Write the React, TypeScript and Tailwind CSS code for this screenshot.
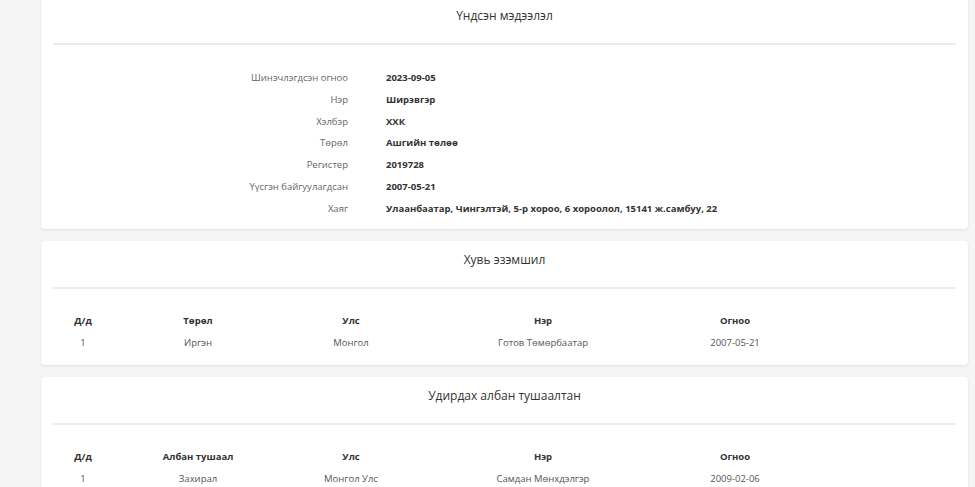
import React from 'react'

const info: [string, string][] = [
  ['Шинэчлэгдсэн огноо', '2023-09-05'],
  ['Нэр', 'Ширэвгэр'],
  ['Хэлбэр', 'ХХК'],
  ['Төрөл', 'Ашгийн төлөө'],
  ['Регистер', '2019728'],
  ['Үүсгэн байгуулагдсан', '2007-05-21'],
  ['Хаяг', 'Улаанбаатар, Чингэлтэй, 5-р хороо, 6 хороолол, 15141 ж.самбуу, 22'],
]

const owners = [['1', 'Иргэн', 'Монгол', 'Готов Төмөрбаатар', '2007-05-21']]
const officers = [['1', 'Захирал', 'Монгол Улс', 'Самдан Мөнхдэлгэр', '2009-02-06']]

function Card({ title, className = '', children }: { title: string; className?: string; children: React.ReactNode }) {
  return (
    <div className={`bg-white rounded-[4px] shadow-[0_1px_3px_rgba(0,0,0,0.08)] px-3 ${className}`}>
      <div className="pt-[10px] mb-[18px] text-center text-[12px] leading-[18px] text-[#333]">{title}</div>
      <div className="h-[2px] bg-[#ececec]" />
      {children}
    </div>
  )
}

function Table({ cols, rows }: { cols: string[]; rows: string[][] }) {
  const grid = 'grid grid-cols-[60px_170px_136px_248px_136px] text-center text-[9.5px] leading-[22px]'
  return (
    <div className="mt-[21px] pb-[11px]">
      <div className={`${grid} font-bold text-[#333]`}>
        {cols.map((c) => (
          <div key={c}>{c}</div>
        ))}
      </div>
      {rows.map((r, i) => (
        <div key={i} className={`${grid} text-[#555]`}>
          {r.map((c, j) => (
            <div key={j}>{c}</div>
          ))}
        </div>
      ))}
    </div>
  )
}

export default function App() {
  return (
    <div className="min-h-screen bg-[#f5f5f5] pl-[41px] pr-[7px] pb-6 font-['Open_Sans',sans-serif]">
      <div className="flex flex-col gap-3">
        <Card title="Үндсэн мэдээлэл" className="-mt-[3px] rounded-t-none">
          <div className="mt-[22px] pb-[9px] grid grid-cols-[295px_1fr] gap-x-[38px] text-[9.5px] leading-[21.8px]">
            {info.map(([k, v]) => (
              <React.Fragment key={k}>
                <div className="text-right text-[#666]">{k}</div>
                <div className="font-bold text-[#333]">{v}</div>
              </React.Fragment>
            ))}
          </div>
        </Card>
        <Card title="Хувь эзэмшил">
          <Table cols={['Д/д', 'Төрөл', 'Улс', 'Нэр', 'Огноо']} rows={owners} />
        </Card>
        <Card title="Удирдах албан тушаалтан">
          <Table cols={['Д/д', 'Албан тушаал', 'Улс', 'Нэр', 'Огноо']} rows={officers} />
        </Card>
      </div>
    </div>
  )
}
